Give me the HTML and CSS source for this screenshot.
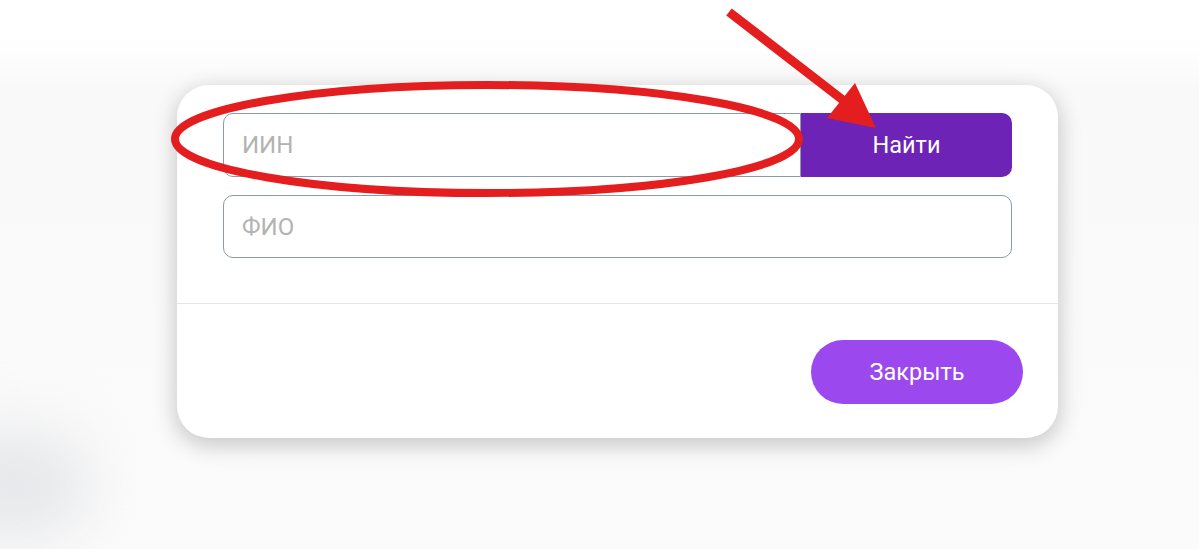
FILE: index.html
```html
<!DOCTYPE html>
<html lang="ru">
	<head>
		<meta charset="utf-8">
		<title>Поиск</title>
		<link rel="stylesheet" href="styles.css">
	</head>
	<body>
		<div class="blob"></div>
		<main class="modal">
			<div class="modal-body">
				<div class="input-group">
					<input type="text" class="field field-left" placeholder="ИИН">
					<button class="btn-find">Найти</button>
				</div>
				<input type="text" class="field" placeholder="ФИО">
			</div>
			<div class="modal-footer">
				<button class="btn-close">Закрыть</button>
			</div>
		</main>
		<svg class="marks" width="1199" height="549" viewBox="0 0 1199 549">
			<ellipse cx="487" cy="139" rx="312" ry="54" fill="none" stroke="#e41e1e" stroke-width="8"/>
			<line x1="729" y1="12" x2="848" y2="104" stroke="#e41e1e" stroke-width="9"/>
			<polygon points="876,128 827,118 855,83" fill="#e41e1e"/>
		</svg>
	</body>
</html>
```

FILE: styles.css
```css
body {
	margin: 0;
	width: 1199px;
	height: 549px;
	overflow: hidden;
	position: relative;
	background: linear-gradient(#ffffff 0px, #ffffff 40px, #f9f9f9 90px, #fbfbfb 549px);
	font-family: Roboto, "Liberation Sans", sans-serif;
	padding-top: 85px;
	padding-left: 177px;
	box-sizing: border-box;
}

.blob {
	position: absolute;
	left: -60px;
	top: 430px;
	width: 150px;
	height: 110px;
	border-radius: 50%;
	background: #e6e7ea;
	filter: blur(30px);
}

.modal {
	position: relative;
	width: 881px;
	height: 353px;
	background: #fff;
	border-radius: 32px;
	box-shadow: 0 6px 22px 2px rgba(0, 0, 0, 0.2);
	display: flex;
	flex-direction: column;
	box-sizing: border-box;
}

.modal-body {
	padding: 28px 46px 0 46px;
	height: 219px;
	box-sizing: border-box;
	display: flex;
	flex-direction: column;
	gap: 18px;
	border-bottom: 1px solid #e6e6e6;
}

.input-group {
	display: flex;
	height: 64px;
}

.field {
	height: 63px;
	box-sizing: border-box;
	border: 1px solid #8c9aa8;
	border-radius: 10px;
	padding: 0 18px;
	font-family: inherit;
	font-size: 24px;
	color: #333;
	outline: none;
	background: #fff;
}

.field::placeholder {
	color: #b3b3b3;
}

.field-left {
	flex: 1;
	border-radius: 10px 0 0 10px;
	height: 64px;
}

.btn-find {
	width: 211px;
	border: none;
	background: #6c23b6;
	color: #fff;
	font-family: inherit;
	font-size: 23.5px;
	border-radius: 0 10px 10px 0;
}

.modal-footer {
	display: flex;
	justify-content: flex-end;
	padding: 36px 35px 0 0;
}

.btn-close {
	width: 212px;
	height: 64px;
	border: none;
	border-radius: 32px;
	background: #9b49ee;
	color: #fff;
	font-family: inherit;
	font-size: 23.5px;
}

.marks {
	position: absolute;
	left: 0;
	top: 0;
	pointer-events: none;
}
```
